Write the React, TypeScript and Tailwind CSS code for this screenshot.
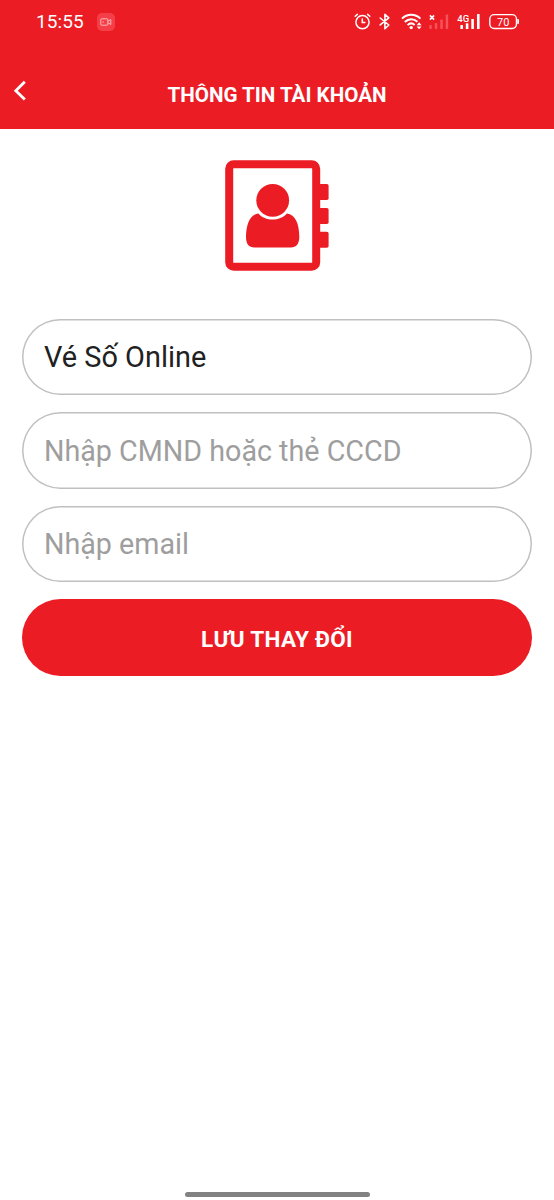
import { useState } from "react";

function RecordIcon() {
  return (
    <div className="flex h-[18px] w-[18px] items-center justify-center rounded-[5px] bg-[#f43e48]">
      <svg width="12" height="8" viewBox="0 0 12 8" fill="none" stroke="#ffc4c6" strokeWidth="0.9">
        <rect x="0.8" y="0.8" width="7" height="6.4" rx="0.8" />
        <path d="M8 3.2 10.8 1.5v5L8 4.8M2.5 4h1.4" />
      </svg>
    </div>
  );
}

function AlarmIcon() {
  return (
    <svg width="17" height="17" viewBox="0 0 17 17" fill="none" stroke="#fff" strokeWidth="1.5" strokeLinecap="round">
      <circle cx="8.5" cy="9.2" r="6.6" />
      <path d="M8.3 6v3.6h2.5" />
      <path d="M1.2 3.3 3.4 1.4M15.8 3.3l-2.2-1.9" />
    </svg>
  );
}

function BluetoothIcon() {
  return (
    <svg width="12" height="17" viewBox="0 0 12 17" fill="none" stroke="#fff" strokeWidth="1.6" strokeLinejoin="round" strokeLinecap="round">
      <path d="m1.2 5 8.6 7-3.9 3.8V1.4l3.9 3.4-8.6 7.1" />
    </svg>
  );
}

function WifiIcon() {
  return (
    <svg width="22" height="17" viewBox="0 0 22 17" fill="none" stroke="#fff" strokeWidth="2">
      <path d="M1 5.6C6.2.4 14.2.4 19.4 5.6" />
      <path d="M3.8 9c3.7-3.6 9-3.6 12.6-.2" />
      <path d="M6.6 12.1c2.1-2 5-2 7.1-.2" />
      <circle cx="10.2" cy="14.6" r="1.7" fill="#fff" stroke="none" />
      <path d="m15.6 12.2 2.5-2.9 2.5 2.9zM15.6 13.4l2.5 2.9 2.5-2.9z" fill="#fff" stroke="none" />
    </svg>
  );
}

function NoSignalIcon() {
  return (
    <svg width="20" height="17" viewBox="0 0 20 17">
      <path d="m.9 2.4 4.2 4.2M5.1 2.4.9 6.6" stroke="#fff" strokeWidth="1.6" />
      <g fill="#f5535b">
        <rect x="0.3" y="12" width="2.5" height="4" rx="0.8" />
        <rect x="5.8" y="10" width="2.5" height="6" rx="0.8" />
        <rect x="11.3" y="6.5" width="2.5" height="9.5" rx="0.8" />
        <rect x="16.7" y="1.5" width="2.5" height="14.5" rx="0.8" />
      </g>
    </svg>
  );
}

function SignalIcon() {
  return (
    <svg width="24" height="17" viewBox="0 0 24 17" fill="#fff">
      <text x="0.3" y="8.6" fontFamily="Roboto, sans-serif" fontSize="9.5" fontWeight="500" textLength="12">
        4G
      </text>
      <rect x="3.4" y="12" width="2.6" height="4" rx="0.6" />
      <rect x="8.8" y="10.2" width="2.6" height="5.8" rx="0.6" />
      <rect x="14.3" y="6" width="2.6" height="10" rx="0.6" />
      <rect x="20" y="1" width="2.6" height="15" rx="0.6" />
    </svg>
  );
}

function BatteryIcon() {
  return (
    <svg width="31" height="17" viewBox="0 0 31 17">
      <rect x="0.8" y="1.6" width="26.7" height="13.9" rx="4.4" fill="none" stroke="#fff" strokeWidth="1.4" />
      <path d="M28.3 6h.7q1 0 1 1v3q0 1-1 1h-.7z" fill="#fff" />
      <text x="14.2" y="12.5" fill="#fff" fontFamily="Roboto, sans-serif" fontSize="11" textAnchor="middle">
        70
      </text>
    </svg>
  );
}

function StatusBar() {
  return (
    <div className="flex h-[43px] items-center justify-between pr-[34.5px] pl-[36px] text-white">
      <div className="flex items-center gap-[13px]">
        <span className="w-[48px] text-[19px] leading-none tracking-[0.1px] whitespace-nowrap">15:55</span>
        <RecordIcon />
      </div>
      <div className="flex items-center gap-2">
        <AlarmIcon />
        <BluetoothIcon />
        <div className="flex items-center gap-1.5 pl-0.5">
          <WifiIcon />
          <NoSignalIcon />
        </div>
        <SignalIcon />
        <BatteryIcon />
      </div>
    </div>
  );
}

function ContactBookIcon() {
  return (
    <svg width="104" height="111" viewBox="0 0 104 111" fill="#ec1c24">
      <rect x="4.2" y="4.2" width="87" height="102.6" rx="4.5" fill="none" stroke="#ec1c24" strokeWidth="8" />
      <rect x="93" y="24" width="10.6" height="16" rx="1.8" />
      <rect x="93" y="48" width="10.6" height="16" rx="1.8" />
      <rect x="93" y="71.7" width="10.6" height="16" rx="1.8" />
      <circle cx="47.7" cy="40.3" r="16.4" />
      <path d="M33.5 53.5C40 61.5 55 61.5 61.8 53.5C70.5 54.5 74.3 64 74.3 77C74.3 84 71 87.5 66 87.5H29.5C24 87.5 21 84 21 77C21.2 64 25 54.5 33.5 53.5Z" />
    </svg>
  );
}

interface FieldProps {
  value: string;
  onChange: (value: string) => void;
  placeholder?: string;
  type?: string;
}

function Field({ value, onChange, placeholder, type = "text" }: FieldProps) {
  return (
    <input
      type={type}
      value={value}
      placeholder={placeholder}
      onChange={(e) => onChange(e.target.value)}
      className="h-[76.5px] w-full rounded-full bg-white px-[22px] pt-px text-[28.9px] text-[#212121] shadow-[inset_0_0_0_1.5px_#c0c0c0] outline-none placeholder:text-[28.7px] placeholder:text-[#9e9e9e]"
    />
  );
}

export default function App() {
  const [name, setName] = useState("Vé Số Online");
  const [idNumber, setIdNumber] = useState("");
  const [email, setEmail] = useState("");

  return (
    <div className="flex h-[1200px] w-[554px] flex-col bg-white font-[Roboto,sans-serif]">
      {/* Header */}
      <header className="h-[129px] shrink-0 bg-[#ec1c24]">
        <StatusBar />
        <div className="grid h-[86px] grid-cols-[40px_1fr_40px] items-center pb-[2px] text-white">
          <button className="pt-[11px] pl-[13px]" aria-label="Back">
            <svg width="14" height="21" viewBox="0 0 14 21" fill="none" stroke="#fff" strokeWidth="2.8">
              <path d="M11.8 1.8 2.8 10.8l9 8.8" />
            </svg>
          </button>
          <h1 className="pt-[20px] text-center text-[20.6px] leading-none font-bold">THÔNG TIN TÀI KHOẢN</h1>
        </div>
      </header>

      {/* Account form */}
      <main className="flex flex-1 flex-col items-center px-[22px] pt-[31px]">
        <ContactBookIcon />
        <form className="mt-[47.5px] flex w-full flex-col gap-[17px]" onSubmit={(e) => e.preventDefault()}>
          <Field value={name} onChange={setName} />
          <Field value={idNumber} onChange={setIdNumber} placeholder="Nhập CMND hoặc thẻ CCCD" />
          <Field value={email} onChange={setEmail} placeholder="Nhập email" type="email" />
          <button
            type="submit"
            className="h-[77px] w-full rounded-full bg-[#ec1c24] pt-[5px] text-[22.5px] font-bold tracking-[0.3px] text-white"
          >
            LƯU THAY ĐỔI
          </button>
        </form>
      </main>

      <div className="mx-auto mb-[3px] h-[5px] w-[185px] shrink-0 rounded-full bg-[#828282]" />
    </div>
  );
}
